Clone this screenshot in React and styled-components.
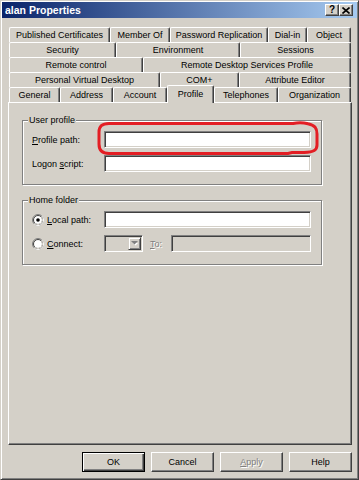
import React from 'react';
import styled, { createGlobalStyle, css } from 'styled-components';

const Global = createGlobalStyle`
  html, body { margin: 0; padding: 0; background: #d4d0c8; }
  body { font-family: "Liberation Sans", Arial, sans-serif; font-size: 9px; color: #000; }
`;

const Window = styled.div`
  position: relative;
  width: 359px;
  height: 480px;
  box-sizing: border-box;
  background: #d4d0c8;
  border: 1px solid;
  border-color: #d4d0c8 #404040 #404040 #d4d0c8;
  box-shadow: inset 1px 1px 0 #fff, inset -1px -1px 0 #808080;
  padding: 1px;
  display: flex;
  flex-direction: column;
`;

const TitleBar = styled.div`
  height: 16px;
  flex: none;
  display: flex;
  align-items: center;
  padding: 0 4px 0 3px;
  background: linear-gradient(to right, #0a246a, #a6caf0);
`;

const Title = styled.div`
  flex: 1;
  color: #fff;
  font-weight: bold;
  font-size: 10.5px;
`;

const CaptionButton = styled.div`
  width: 14px;
  height: 12px;
  box-sizing: border-box;
  background: #d4d0c8;
  border: 1px solid;
  border-color: #fff #404040 #404040 #fff;
  box-shadow: inset -1px -1px 0 #808080;
  display: flex;
  align-items: center;
  justify-content: center;
  font-weight: bold;
  font-size: 10px;
  line-height: 1;
`;

const Body = styled.div`
  flex: 1;
  display: flex;
  flex-direction: column;
  padding: 9px 5px 0 6px;
`;

const Tabs = styled.div`
  display: flex;
  flex-direction: column;
  margin: 0 1px;
`;

const TabRow = styled.div`
  display: flex;
  align-items: flex-start;
  height: 15px;
`;

const Tab = styled.div`
  box-sizing: border-box;
  flex: none;
  width: ${p => p.$w}px;
  height: 15px;
  background: #d4d0c8;
  border-top: 1px solid #fff;
  border-left: 1px solid #fff;
  border-right: 1px solid #404040;
  box-shadow: inset -1px 0 0 #808080;
  border-top-left-radius: 2px;
  border-top-right-radius: 2px;
  display: flex;
  align-items: center;
  justify-content: center;
  white-space: nowrap;
  &:last-child { flex: 1; }
  ${p => p.$active && css`
    position: relative;
    z-index: 1;
    height: 18px;
    margin-top: -2px;
    padding-bottom: 2px;
  `}
`;

const Panel = styled.div`
  box-sizing: border-box;
  height: 343px;
  flex: none;
  border: 1px solid;
  border-color: #fff #404040 #404040 #fff;
  box-shadow: inset -1px -1px 0 #808080;
  padding: 17px 0 0 13px;
  display: flex;
  flex-direction: column;
  gap: 15px;
`;

const Group = styled.div`
  position: relative;
  width: 300px;
  box-sizing: border-box;
  border: 1px solid #808080;
  box-shadow: inset 1px 1px 0 #fff, 1px 1px 0 #fff;
  padding: 10px 10px 12px 9px;
  display: flex;
  flex-direction: column;
  gap: 7px;
`;

const Legend = styled.div`
  position: absolute;
  top: -7px;
  left: 5px;
  padding: 0 1px;
  background: #d4d0c8;
  line-height: 12px;
`;

const Row = styled.div`
  display: flex;
  align-items: center;
  height: 17px;
`;

const Label = styled.div`
  width: ${p => p.$w || 72}px;
  flex: none;
  display: flex;
  align-items: center;
  gap: 3px;
  white-space: nowrap;
  color: ${p => (p.$disabled ? '#808080' : '#000')};
  text-shadow: ${p => (p.$disabled ? '1px 1px 0 #fff' : 'none')};
  margin-left: ${p => p.$ml || 0}px;
`;

const Key = styled.span`
  text-decoration: underline;
`;

const Input = styled.div`
  box-sizing: border-box;
  width: ${p => p.$w}px;
  height: 17px;
  flex: none;
  background: ${p => (p.$disabled ? '#d4d0c8' : '#fff')};
  border: 1px solid;
  border-color: #808080 #fff #fff #808080;
  box-shadow: inset 1px 1px 0 #404040, inset -1px -1px 0 #d4d0c8;
  position: relative;
`;

const ComboButton = styled.div`
  position: absolute;
  top: 1px;
  right: 1px;
  bottom: 1px;
  width: 13px;
  box-sizing: border-box;
  background: #d4d0c8;
  border: 1px solid;
  border-color: #d4d0c8 #404040 #404040 #d4d0c8;
  box-shadow: inset 1px 1px 0 #fff, inset -1px -1px 0 #808080;
  display: flex;
  align-items: center;
  justify-content: center;
`;

const Buttons = styled.div`
  display: flex;
  justify-content: flex-end;
  gap: 6px;
  margin-top: 7px;
`;

const Button = styled.div`
  box-sizing: border-box;
  width: 63px;
  height: 20px;
  background: #d4d0c8;
  display: flex;
  align-items: center;
  justify-content: center;
  border: 1px solid;
  border-color: #fff #404040 #404040 #fff;
  box-shadow: inset -1px -1px 0 #808080;
  color: ${p => (p.$disabled ? '#808080' : '#000')};
  text-shadow: ${p => (p.$disabled ? '1px 1px 0 #fff' : 'none')};
  ${p => p.$default && css`
    border-color: #000;
    box-shadow: inset 1px 1px 0 #fff, inset -1px -1px 0 #404040, inset -2px -2px 0 #808080;
  `}
`;

const Annotation = styled.svg`
  position: absolute;
  top: -1px;
  left: -1px;
  pointer-events: none;
  z-index: 5;
`;

const Radio = ({ checked }) => (
  <svg width="12" height="12" viewBox="0 0 12 12">
    <circle cx="6" cy="6" r="5.5" fill="none" stroke="#808080" />
    <path d="M9.89 2.11 A5.5 5.5 0 0 1 2.11 9.89" fill="none" stroke="#fff" />
    <circle cx="6" cy="6" r="4.5" fill="#fff" stroke="#404040" />
    <path d="M9.18 2.82 A4.5 4.5 0 0 1 2.82 9.18" fill="none" stroke="#d4d0c8" />
    {checked && <circle cx="6" cy="6" r="1.8" fill="#000" />}
  </svg>
);

const tabRows = [
  [['Published Certificates', 101], ['Member Of', 60], ['Password Replication', 98], ['Dial-in', 39], ['Object']],
  [['Security', 107], ['Environment', 124], ['Sessions']],
  [['Remote control', 134], ['Remote Desktop Services Profile']],
  [['Personal Virtual Desktop', 151], ['COM+', 79], ['Attribute Editor']],
  [['General', 51], ['Address', 53], ['Account', 54], ['Profile', 47, true], ['Telephones', 64], ['Organization']],
];

export default function App() {
  return (
    <>
      <Global />
      <Window>
        <TitleBar>
          <Title>alan Properties</Title>
          <CaptionButton>?</CaptionButton>
          <CaptionButton>
            <svg width="8" height="7" viewBox="0 0 8 7">
              <path d="M0.5 0.5 L7.5 6.5 M7.5 0.5 L0.5 6.5" stroke="#000" strokeWidth="1.6" />
            </svg>
          </CaptionButton>
        </TitleBar>
        <Body>
          <Tabs>
            {tabRows.map((row, i) => (
              <TabRow key={i}>
                {row.map(([name, w, active]) => (
                  <Tab key={name} $w={w} $active={active}>{name}</Tab>
                ))}
              </TabRow>
            ))}
          </Tabs>
          <Panel>
            <Group>
              <Legend>User profile</Legend>
              <Row>
                <Label><span><Key>P</Key>rofile path:</span></Label>
                <Input $w={207} />
              </Row>
              <Row>
                <Label><span>Logon <Key>s</Key>cript:</span></Label>
                <Input $w={207} />
              </Row>
            </Group>
            <Group>
              <Legend>Home folder</Legend>
              <Row>
                <Label><Radio checked /><span><Key>L</Key>ocal path:</span></Label>
                <Input $w={207} />
              </Row>
              <Row>
                <Label><Radio /><span><Key>C</Key>onnect:</span></Label>
                <Input $w={39} $disabled>
                  <ComboButton>
                    <svg width="7" height="5" viewBox="0 0 7 5">
                      <path d="M1 1 L6 1 L3.5 3.5 Z" fill="#fff" transform="translate(1 1)" />
                      <path d="M0 0 L7 0 L3.5 3.5 Z" fill="#808080" />
                    </svg>
                  </ComboButton>
                </Input>
                <Label $w={21} $ml={7} $disabled><span><Key>T</Key>o:</span></Label>
                <Input $w={140} $disabled />
              </Row>
            </Group>
          </Panel>
          <Buttons>
            <Button $default>OK</Button>
            <Button>Cancel</Button>
            <Button $disabled><span><Key>A</Key>pply</span></Button>
            <Button>Help</Button>
          </Buttons>
        </Body>
        <Annotation width="359" height="480" viewBox="0 0 359 480">
          <path
            d="M109 123.5 L293 123.5 C298 122.3 303 122.3 308 123.8 C315 125.5 317 128 317 134 L317 145 C317 150 314 152 304 152.5 L292 152.5 L288 153.5 L109 153.5 C102 153.5 99 150 99 144 L99 132 C99 126 102 123.5 109 123.5 Z"
            fill="none"
            stroke="#e31e24"
            strokeWidth="3"
          />
        </Annotation>
      </Window>
    </>
  );
}
